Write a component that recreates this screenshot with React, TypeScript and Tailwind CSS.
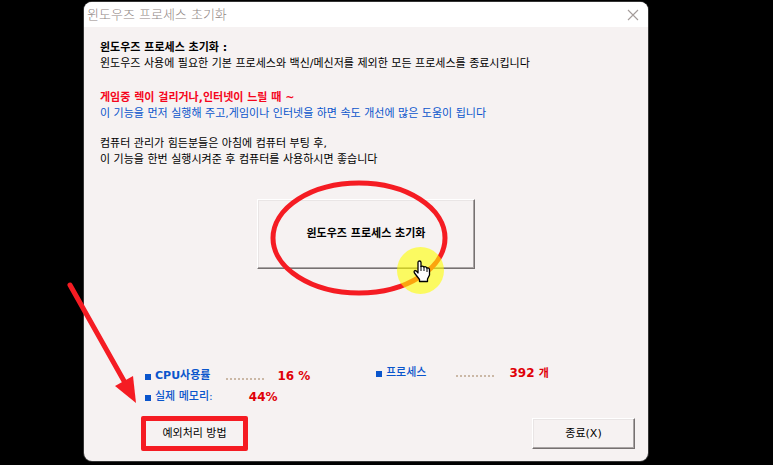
import { ReactNode } from "react";

const bevel =
  "border border-t-white border-l-white border-r-[#767171] border-b-[#767171] bg-[#f6f2f2] shadow-[inset_-1px_-1px_0_#a9a4a4,inset_1px_1px_0_#e9e5e5]";

function Stat({ label, children }: { label: ReactNode; children: ReactNode }) {
  return (
    <div className="flex h-5 items-center whitespace-nowrap">
      <span className="mr-1 mt-0.5 size-1.5 bg-[#0a55cc]" />
      <dt className="text-[11px] font-medium text-[#0a55cc]">{label}</dt>
      {children}
    </div>
  );
}

function Dots() {
  return (
    <svg aria-hidden="true" className="mt-1.5 shrink-0" width="39" height="2" viewBox="0 0 39 2">
      <path d="M0 1H39" stroke="#cbb8a6" strokeWidth="2" strokeDasharray="2 2" />
    </svg>
  );
}

function Pointer() {
  return (
    <div className="pointer-events-none absolute top-[48px] left-[140px] size-[47px] rounded-full bg-[#ffff00]/60">
      <svg className="absolute top-[13px] left-4" width="18" height="23" viewBox="0 0 18 23">
        <path
          d="M5 13V2.5Q5 1 6.5 1T8 2.5V6.5Q9.5 5.5 11 7Q12.5 6 14 8Q16.5 7.5 16.5 10V15L14.5 19V21.5H6.5V19.5L1.5 13Q0.5 11 2 10.5Q3.5 10.5 5 13Z"
          fill="white"
          stroke="black"
          strokeWidth="1.3"
          strokeLinejoin="round"
        />
        <path d="M8 6v5M11 7v4M14 8v4" stroke="black" strokeWidth="1" fill="none" />
      </svg>
    </div>
  );
}

export default function App() {
  return (
    <div className="min-h-screen bg-black pt-0.5 pr-[125px] pb-1 pl-[84px] font-['DejaVu_Sans','Noto_Sans_CJK_KR',sans-serif] text-[11px] leading-4 text-black">
      <main className="relative flex min-h-[459px] flex-col rounded-lg bg-[#f6f2f2] shadow-[0_0_0_1px_#343434]">
        <header className="flex h-[25px] items-center justify-between rounded-t-lg bg-white pr-2 pl-[3px]">
          <h1 className="text-[13px] font-light text-[#8f8583]">윈도우즈 프로세스 초기화</h1>
          <button aria-label="닫기" className="flex size-[14px] items-center justify-center text-[#a49c9a]">
            <svg width="12" height="12" viewBox="0 0 12 12" stroke="currentColor" strokeWidth="1.1">
              <path d="M1 1l10 10M11 1L1 11" />
            </svg>
          </button>
        </header>

        <section className="flex flex-col px-4 pt-[13px] whitespace-nowrap">
          <h2 className="font-bold">윈도우즈 프로세스 초기화 :</h2>
          <p>윈도우즈 사용에 필요한 기본 프로세스와 백신/메신저를 제외한 모든 프로세스를 종료시킵니다</p>
          <p className="mt-[18px] font-bold text-[#f5051c]">게임중 렉이 걸리거나,인터넷이 느릴 때 ~</p>
          <p className="text-[#0a55cc]">이 기능을 먼저 실행해 주고,게임이나 인터넷을 하면 속도 개선에 많은 도움이 됩니다</p>
          <p className="mt-[14px]">
            컴퓨터 관리가 힘든분들은 아침에 컴퓨터 부팅 후,
            <br />이 기능을 한번 실행시켜준 후 컴퓨터를 사용하시면 좋습니다
          </p>
        </section>

        <div className="relative mx-auto mt-[31px] h-[70px] w-[218px]">
          <button className={`h-full w-full font-bold ${bevel}`}>윈도우즈 프로세스 초기화</button>
          <svg
            className="pointer-events-none absolute top-[-20px] left-[13px]"
            width="178"
            height="118"
            viewBox="0 0 178 118"
            fill="none"
          >
            <ellipse cx="89" cy="59" rx="86" ry="55" stroke="#f51c23" strokeWidth="5" />
          </svg>
          <Pointer />
        </div>

        <dl className="mt-[94px] grid grid-cols-[231px_1fr] pl-[61px]">
          <div className="flex flex-col gap-px pt-[3px]">
            <Stat label={<b>CPU사용률</b>}>
              <span className="w-4" />
              <Dots />
              <dd className="ml-3 text-xs font-bold text-[#e00008]">16 %</dd>
            </Stat>
            <Stat label="실제 메모리:">
              <dd className="ml-9 text-xs font-bold text-[#e00008]">44%</dd>
            </Stat>
          </div>
          <Stat label="프로세스">
            <span className="w-[30px]" />
            <Dots />
            <dd className="ml-3.5 text-xs font-bold text-[#e00008]">
              392 <span className="text-[11px]">개</span>
            </dd>
          </Stat>
        </dl>

        <footer className="mt-auto flex items-center justify-between pr-[13px] pb-[10px] pl-[57px]">
          <button className="h-[35px] w-[107px] rounded-xs border-5 border-[#f51c23]">예외처리 방법</button>
          <button className={`h-[31px] w-[103px] ${bevel}`}>종료(X)</button>
        </footer>

        <svg
          className="pointer-events-none absolute top-[280px] left-[-18px]"
          width="72"
          height="124"
          viewBox="0 0 72 124"
        >
          <path d="M4 3L58 99" stroke="#f51c23" strokeWidth="5" strokeLinecap="round" />
          <path d="M70 121L49 104L67 94Z" fill="#f51c23" />
        </svg>
      </main>
    </div>
  );
}
